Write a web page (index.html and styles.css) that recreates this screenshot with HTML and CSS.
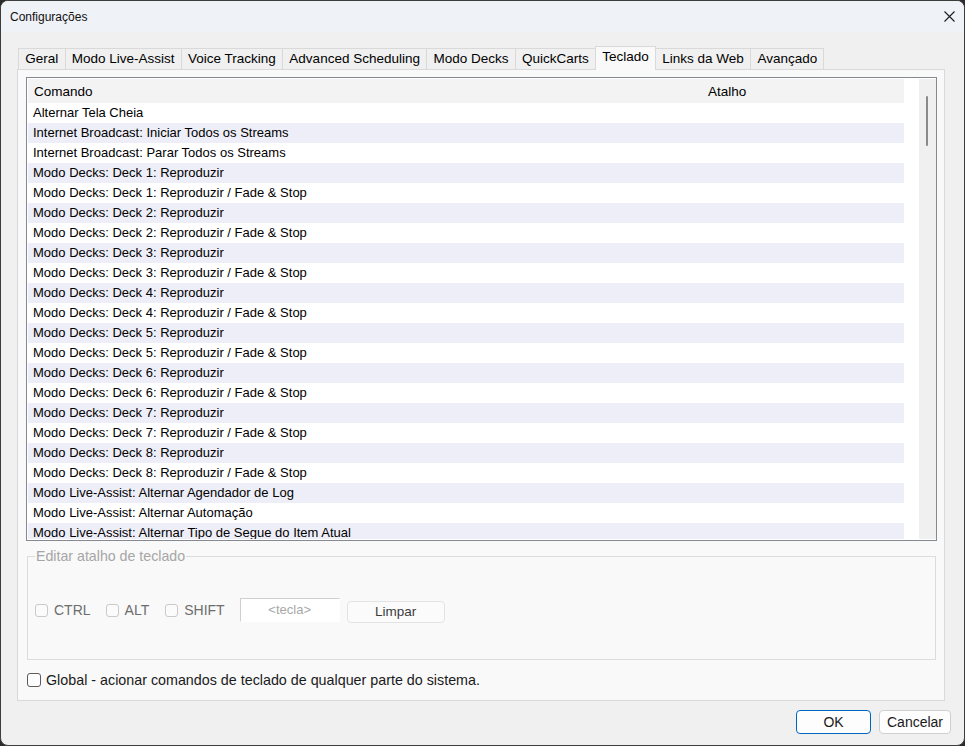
FILE: index.html
```html
<!DOCTYPE html>
<html lang="pt-br">
<head>
  <meta charset="UTF-8">
  <title>Configurações</title>
  <link rel="stylesheet" href="styles.css">
</head>
<body>
  <div class="window">
    <!-- Barra de título -->
    <div class="titlebar">
      <span class="title">Configurações</span>
      <svg class="close" width="11" height="11" viewBox="0 0 11 11">
        <path d="M0.5 0.5 L10.5 10.5 M10.5 0.5 L0.5 10.5" stroke="#1b1b1b" stroke-width="1.1" fill="none"/>
      </svg>
    </div>

    <div class="dialog">
      <!-- Abas -->
      <div class="tabs">
        <div class="tab">Geral</div>
        <div class="tab">Modo Live-Assist</div>
        <div class="tab">Voice Tracking</div>
        <div class="tab">Advanced Scheduling</div>
        <div class="tab">Modo Decks</div>
        <div class="tab">QuickCarts</div>
        <div class="tab active">Teclado</div>
        <div class="tab">Links da Web</div>
        <div class="tab">Avançado</div>
      </div>

      <div class="panel">
        <!-- Lista de comandos -->
        <div class="list">
          <div class="list-main">
            <div class="list-head">
              <span class="col-cmd">Comando</span>
              <span class="col-key">Atalho</span>
            </div>
            <div class="row">Alternar Tela Cheia</div>
            <div class="row">Internet Broadcast: Iniciar Todos os Streams</div>
            <div class="row">Internet Broadcast: Parar Todos os Streams</div>
            <div class="row">Modo Decks: Deck 1: Reproduzir</div>
            <div class="row">Modo Decks: Deck 1: Reproduzir / Fade &amp; Stop</div>
            <div class="row">Modo Decks: Deck 2: Reproduzir</div>
            <div class="row">Modo Decks: Deck 2: Reproduzir / Fade &amp; Stop</div>
            <div class="row">Modo Decks: Deck 3: Reproduzir</div>
            <div class="row">Modo Decks: Deck 3: Reproduzir / Fade &amp; Stop</div>
            <div class="row">Modo Decks: Deck 4: Reproduzir</div>
            <div class="row">Modo Decks: Deck 4: Reproduzir / Fade &amp; Stop</div>
            <div class="row">Modo Decks: Deck 5: Reproduzir</div>
            <div class="row">Modo Decks: Deck 5: Reproduzir / Fade &amp; Stop</div>
            <div class="row">Modo Decks: Deck 6: Reproduzir</div>
            <div class="row">Modo Decks: Deck 6: Reproduzir / Fade &amp; Stop</div>
            <div class="row">Modo Decks: Deck 7: Reproduzir</div>
            <div class="row">Modo Decks: Deck 7: Reproduzir / Fade &amp; Stop</div>
            <div class="row">Modo Decks: Deck 8: Reproduzir</div>
            <div class="row">Modo Decks: Deck 8: Reproduzir / Fade &amp; Stop</div>
            <div class="row">Modo Live-Assist: Alternar Agendador de Log</div>
            <div class="row">Modo Live-Assist: Alternar Automação</div>
            <div class="row">Modo Live-Assist: Alternar Tipo de Segue do Item Atual</div>
          </div>
          <div class="list-gap"></div>
          <div class="scrollbar"><div class="thumb"></div></div>
        </div>

        <!-- Editor de atalho -->
        <fieldset class="editor">
          <legend>Editar atalho de teclado</legend>
          <div class="keys">
            <label class="check"><input type="checkbox" disabled> CTRL</label>
            <label class="check"><input type="checkbox" disabled> ALT</label>
            <label class="check"><input type="checkbox" disabled> SHIFT</label>
            <div class="key-input">&lt;tecla&gt;</div>
            <button class="clear-btn" disabled>Limpar</button>
          </div>
        </fieldset>

        <label class="global"><input type="checkbox"> Global - acionar comandos de teclado de qualquer parte do sistema.</label>
      </div>

      <!-- Botões -->
      <div class="footer">
        <button class="btn primary">OK</button>
        <button class="btn">Cancelar</button>
      </div>
    </div>
  </div>
</body>
</html>
```

FILE: styles.css
```css
body {
  margin: 0;
  background-color: #2b2b2b;
  font-family: "Liberation Sans", Arial, sans-serif;
  color: #000;
}

.window {
  width: 965px;
  height: 746px;
  box-sizing: border-box;
  border: 1px solid #3d3d3d;
  border-radius: 8px;
  overflow: hidden;
  background-color: #f0f0f0;
  display: flex;
  flex-direction: column;
}

/* Barra de título */
.titlebar {
  height: 31px;
  flex-shrink: 0;
  background-color: #eff2f6;
  display: flex;
  align-items: center;
  justify-content: space-between;
  padding: 0 9px 0 9px;
  font-size: 12px;
  color: #111;
}

.titlebar .close {
  margin-top: -1px;
}

.dialog {
  flex: 1;
  display: flex;
  flex-direction: column;
  padding: 14px 13px 11px 16px;
}

/* Abas */
.tabs {
  display: flex;
  align-items: flex-end;
  height: 23px;
  padding-left: 1px;
  margin-right: 6px;
}

.tab {
  height: 21px;
  box-sizing: border-box;
  padding: 0 6.25px;
  border: 1px solid #d9d9d9;
  border-bottom: none;
  margin-left: -1px;
  background-color: #f0f0f0;
  font-size: 13.5px;
  line-height: 20px;
  color: #000;
}

.tab:first-child {
  margin-left: 0;
}

.tab.active {
  height: 24px;
  margin-bottom: -1px;
  background-color: #f9f9f9;
  position: relative;
  z-index: 1;
  line-height: 19px;
}

.panel {
  height: 632px;
  box-sizing: border-box;
  margin-right: 6px;
  border: 1px solid #d9d9d9;
  background-color: #f9f9f9;
  padding: 7px 7px 0 8px;
}

/* Lista */
.list {
  height: 464px;
  box-sizing: border-box;
  border: 1px solid #858991;
  background-color: #fff;
  padding: 1px 0 1px 1px;
  display: flex;
}

.list-main {
  width: 876px;
  overflow: hidden;
}

.list-gap {
  flex: 1;
}

.list-head {
  height: 24px;
  background-color: #f3f3f3;
  display: flex;
  align-items: center;
  font-size: 13.5px;
}

.col-cmd {
  width: 674px;
  padding-left: 6px;
  box-sizing: border-box;
}

.col-key {
  padding-left: 6px;
}

.row {
  height: 20px;
  line-height: 20px;
  padding-left: 5px;
  font-size: 13px;
  white-space: nowrap;
}

.row:nth-child(odd) {
  background-color: #eeeef8;
}

.scrollbar {
  width: 17px;
  background-color: #f0f0f0;
  position: relative;
}

.thumb {
  position: absolute;
  left: 7px;
  top: 17px;
  width: 2px;
  height: 50px;
  border-radius: 1px;
  background-color: #8a8a8a;
}

/* Editor */
.editor {
  margin: 7px 0 0 1px;
  width: 909px;
  box-sizing: border-box;
  border: 1px solid #dcdcdc;
  padding: 34px 8px 37px 7px;
}

.editor legend {
  padding: 0 1px;
  font-size: 14.2px;
  line-height: 16px;
  color: #a6a6a6;
}

.keys {
  display: flex;
  align-items: center;
  height: 24px;
}

.check {
  display: flex;
  align-items: center;
  font-size: 14px;
  color: #6d6d6d;
  margin-right: 15px;
}

.check input {
  appearance: none;
  width: 13px;
  height: 13px;
  margin: 0 6px 0 0;
  border: 1px solid #cacaca;
  border-radius: 3px;
  background-color: #fbfbfb;
}

.check:nth-child(2) {
  margin-right: 16px;
}

.key-input {
  width: 100px;
  height: 24px;
  box-sizing: border-box;
  border: 1px solid #cfcfcf;
  border-right-color: #fff;
  border-bottom-color: #fff;
  background-color: #fff;
  color: #a8a8a8;
  font-size: 13px;
  line-height: 22px;
  text-align: center;
  margin-right: 7px;
}

.clear-btn {
  width: 98px;
  height: 22px;
  border: 1px solid #e3e3e3;
  border-radius: 4px;
  background-color: #fbfbfb;
  color: #3b3b3b;
  font-family: inherit;
  font-size: 13.5px;
  padding: 0;
  margin-top: 3px;
}

.global {
  display: flex;
  align-items: center;
  margin-top: 12px;
  font-size: 14.3px;
  color: #1a1a1a;
}

.global input {
  appearance: none;
  width: 14px;
  height: 14px;
  margin: 0 5px 0 1px;
  border: 1px solid #5c5c5c;
  border-radius: 3px;
  background-color: #fdfdfd;
}

/* Botões */
.footer {
  display: flex;
  justify-content: flex-end;
  gap: 8px;
  padding-top: 9px;
}

.btn {
  height: 24px;
  width: 72px;
  border: 1px solid #d0d0d0;
  border-radius: 4px;
  background-color: #fdfdfd;
  font-family: inherit;
  font-size: 14px;
  color: #1a1a1a;
  padding: 0;
}

.btn.primary {
  width: 75px;
  border-color: #0067c0;
}
```
